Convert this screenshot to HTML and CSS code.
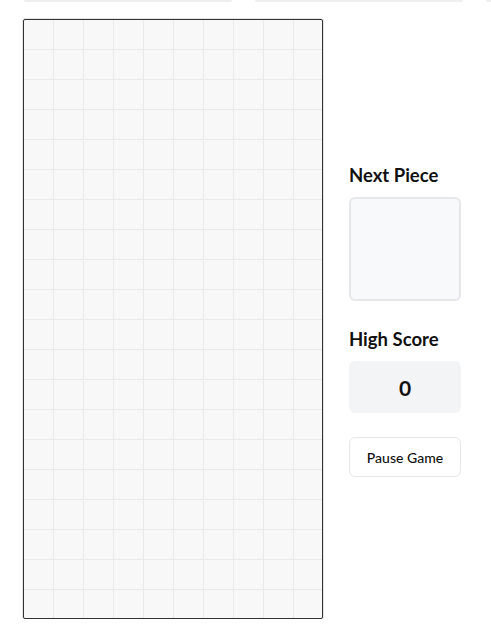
FILE: index.html
```html
<!DOCTYPE html>
<html lang="en">
<head>
<meta charset="utf-8">
<title>Tetris</title>
<link rel="stylesheet" href="styles.css">
</head>
<body>
  <div class="stats">
    <div class="stat-card"></div>
    <div class="stat-card"></div>
    <div class="stat-card"></div>
  </div>
  <main class="game">
    <div class="board"></div>
    <aside class="panel">
      <h2 class="panel-title">Next Piece</h2>
      <div class="next-box"></div>
      <h2 class="panel-title high">High Score</h2>
      <div class="score-box">0</div>
      <button class="pause-btn">Pause Game</button>
    </aside>
  </main>
</body>
</html>
```
FILE: styles.css
```css
* { box-sizing: border-box; }
html, body { margin: 0; padding: 0; background: #ffffff; }
body {
  font-family: "Lato", "Noto Sans", sans-serif;
  color: #111111;
  overflow: hidden;
}
.stats {
  display: flex;
  gap: 23px;
  padding-left: 24px;
  height: 2px;
  overflow: hidden;
}
.stat-card {
  flex: 0 0 208px;
  height: 2px;
  background: #eeeff1;
  border-radius: 0 0 3px 3px;
}
.game {
  display: flex;
  align-items: center;
  padding: 17px 0 0 23px;
}
.board {
  flex: 0 0 300px;
  width: 300px;
  height: 600px;
  border: 1px solid #333333;
  border-radius: 2px;
  box-shadow: 0 0 0 1px #e3e4e8;
  background-color: #f8f8f8;
  background-image:
    linear-gradient(to right, transparent 29px, #e9e9e9 29px, #e9e9e9 30px),
    linear-gradient(to bottom, transparent 29px, #e9e9e9 29px, #e9e9e9 30px);
  background-size: 30px 30px;
  background-origin: padding-box;
}
.panel {
  width: 112px;
  margin-left: 26px;
  display: flex;
  flex-direction: column;
}
.panel-title {
  margin: 0 0 8px 0;
  font-size: 18.5px;
  line-height: 28px;
  font-weight: 700;
  color: #111111;
}
.panel-title.high { margin-top: 24px; }
.next-box {
  width: 112px;
  height: 104px;
  border: 2px solid #e5e7eb;
  border-radius: 6px;
  background: #f8f9fb;
}
.score-box {
  height: 52px;
  border-radius: 6px;
  background: #f3f4f6;
  display: flex;
  align-items: center;
  justify-content: center;
  font-size: 21px;
  font-weight: 700;
  color: #111111;
}
.pause-btn {
  margin-top: 24px;
  height: 40px;
  width: 112px;
  border: 1px solid #e5e7eb;
  border-radius: 6px;
  background: #ffffff;
  font-family: inherit;
  font-size: 14px;
  font-weight: 500;
  color: #111111;
  padding: 0;
}
```
